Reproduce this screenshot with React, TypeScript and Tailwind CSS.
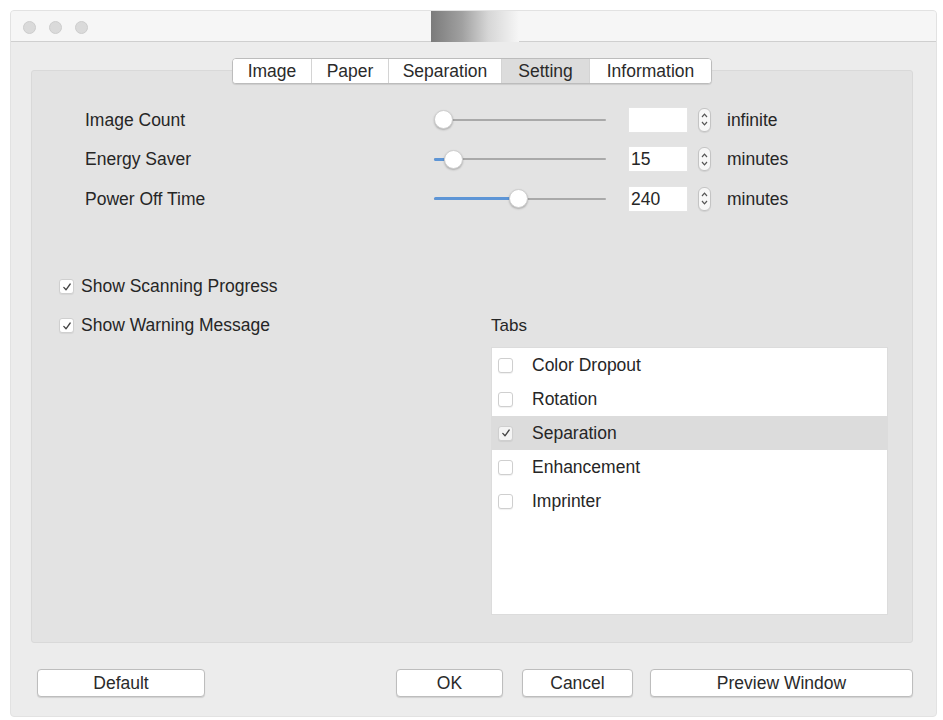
import React from "react";

const font = { fontFamily: '"Liberation Sans", Arial, Helvetica, sans-serif' };

function Stepper() {
  return (
    <div className="w-[13px] h-[24px] rounded-[6px] border border-[#c4c4c4] bg-[#f7f7f7] flex flex-col items-center justify-center gap-[3px] shadow-[0_1px_1px_rgba(0,0,0,0.08)]">
      <svg width="7" height="5" viewBox="0 0 7 5"><path d="M1 4 L3.5 1.2 L6 4" fill="none" stroke="#555" strokeWidth="1.2" /></svg>
      <svg width="7" height="5" viewBox="0 0 7 5"><path d="M1 1 L3.5 3.8 L6 1" fill="none" stroke="#555" strokeWidth="1.2" /></svg>
    </div>
  );
}

function Slider({ thumb, fill }: { thumb: number; fill: number }) {
  return (
    <div className="relative w-[172px] h-[22px]">
      <div className="absolute left-0 right-0 top-[10px] h-[2px] bg-[#a9a9a9] rounded-full" />
      {fill > 0 && (
        <div className="absolute left-0 top-[9.5px] h-[3px] bg-[#5d95d6] rounded-full" style={{ width: fill }} />
      )}
      <div
        className="absolute top-[1.5px] w-[19px] h-[19px] rounded-full bg-white border border-[#cfcfcf] shadow-[0_1px_2px_rgba(0,0,0,0.25)]"
        style={{ left: thumb }}
      />
    </div>
  );
}

function SettingRow({ label, value, unit, thumb, fill }: { label: string; value: string; unit: string; thumb: number; fill: number }) {
  return (
    <div className="flex items-center h-[39.5px]">
      <div className="w-[349px] text-[17.5px] text-[#262626]">{label}</div>
      <Slider thumb={thumb} fill={fill} />
      <div className="ml-[22px] w-[60px] h-[26px] bg-white border border-[#e4e4e4] flex items-center pl-[2px] text-[17.5px] text-[#262626]">
        {value}
      </div>
      <div className="ml-[10px]"><Stepper /></div>
      <div className="ml-[16px] text-[17.5px] text-[#262626]">{unit}</div>
    </div>
  );
}

function SmallCheck({ checked, bg = "bg-white" }: { checked: boolean; bg?: string }) {
  return (
    <div className={`w-[15px] h-[15px] rounded-[3px] border border-[#cfcfcf] ${bg} flex items-center justify-center shadow-[0_1px_1px_rgba(0,0,0,0.06)]`}>
      {checked && (
        <svg width="10" height="10" viewBox="0 0 10 10">
          <path d="M1.8 5.4 L4 7.8 L8.2 2" fill="none" stroke="#444" strokeWidth="1.3" strokeLinecap="round" strokeLinejoin="round" />
        </svg>
      )}
    </div>
  );
}

const tabs = ["Image", "Paper", "Separation", "Setting", "Information"];
const tabWidths = ["w-[78px]", "w-[77px]", "w-[113px]", "w-[88px]", "w-[122px]"];

const listItems = [
  { label: "Color Dropout", checked: false },
  { label: "Rotation", checked: false },
  { label: "Separation", checked: true },
  { label: "Enhancement", checked: false },
  { label: "Imprinter", checked: false },
];

function Button({ label, w }: { label: string; w: string }) {
  return (
    <div className={`${w} h-[28px] rounded-[4px] bg-white border border-[#bdbdbd] shadow-[0_1px_1px_rgba(0,0,0,0.12)] flex items-center justify-center text-[17.5px] text-[#2a2a2a]`}>
      {label}
    </div>
  );
}

export default function App() {
  return (
    <div className="w-[943px] h-[720px] bg-white pt-[10px] pl-[10px]" style={font}>
      <div className="w-[927px] h-[707px] bg-[#ececec] border border-[#e2e2e2] rounded-[4px] flex flex-col overflow-hidden">
        {/* Title bar */}
        <div className="h-[31px] bg-[#f6f6f6] border-b border-[#cfcfcf] flex items-start shrink-0">
          <div className="flex items-center gap-[13px] pl-[12px] pt-[10px]">
            <div className="w-[13px] h-[13px] rounded-full bg-[#dadada] border border-[#cdcdcd]" />
            <div className="w-[13px] h-[13px] rounded-full bg-[#dadada] border border-[#cdcdcd]" />
            <div className="w-[13px] h-[13px] rounded-full bg-[#dadada] border border-[#cdcdcd]" />
          </div>
          <div className="ml-[343px] w-[88px] h-[31px] bg-[linear-gradient(to_right,#7b7b7b_0%,#a0a0a0_35%,#d6d6d6_65%,#f6f6f6_100%)]" />
        </div>

        {/* Body */}
        <div className="pt-[16px] pl-[20px] pr-[23px] flex flex-col">
          <div className="flex justify-center relative z-10">
            <div className="flex h-[26px] bg-white border border-[#bcbcbc] rounded-[4px] shadow-[0_1px_1px_rgba(0,0,0,0.1)] overflow-hidden">
              {tabs.map((t, i) => (
                <div
                  key={t}
                  className={`${tabWidths[i]} flex items-center justify-center text-[17.5px] text-[#2a2a2a] ${i > 0 ? "border-l border-[#d4d4d4]" : ""} ${t === "Setting" ? "bg-[#dcdcdc]" : "bg-white"}`}
                >
                  {t}
                </div>
              ))}
            </div>
          </div>

          <div className="-mt-[14px] h-[573px] bg-[#e3e3e3] border border-[#d9d9d9] rounded-[3px] flex flex-col">
            <div className="pt-[29px] pl-[53px] flex flex-col">
              <SettingRow label="Image Count" value="" unit="infinite" thumb={0} fill={0} />
              <SettingRow label="Energy Saver" value="15" unit="minutes" thumb={10} fill={14} />
              <SettingRow label="Power Off Time" value="240" unit="minutes" thumb={75} fill={80} />
            </div>

            <div className="mt-[48.5px] pl-[27px] flex">
              <div className="w-[432px] flex flex-col">
                <div className="h-[39px] flex items-center gap-[7px]">
                  <SmallCheck checked={true} />
                  <span className="text-[17.5px] text-[#262626]">Show Scanning Progress</span>
                </div>
                <div className="h-[39px] flex items-center gap-[7px]">
                  <SmallCheck checked={true} />
                  <span className="text-[17.5px] text-[#262626]">Show Warning Message</span>
                </div>
              </div>
              <div className="pt-[39px] flex flex-col">
                <div className="h-[39px] flex items-center text-[17px] text-[#262626]">Tabs</div>
                <div className="mt-[2px] w-[397px] h-[268px] bg-white border border-[#dcdcdc] flex flex-col">
                  {listItems.map((it) => (
                    <div
                      key={it.label}
                      className={`h-[34px] flex items-center pl-[6px] gap-[19px] ${it.checked ? "bg-[#dcdcdc]" : ""}`}
                    >
                      <SmallCheck checked={it.checked} bg={it.checked ? "bg-[#f4f4f4]" : "bg-white"} />
                      <span className="text-[17.5px] text-[#262626]">{it.label}</span>
                    </div>
                  ))}
                </div>
              </div>
            </div>
          </div>
        </div>

        {/* Buttons */}
        <div className="mt-[26px] pl-[26px] pr-[23px] flex items-center">
          <Button label="Default" w="w-[168px]" />
          <div className="ml-auto flex items-center">
            <Button label="OK" w="w-[107px]" />
            <div className="ml-[19px]"><Button label="Cancel" w="w-[111px]" /></div>
            <div className="ml-[17px]"><Button label="Preview Window" w="w-[263px]" /></div>
          </div>
        </div>
      </div>
    </div>
  );
}
